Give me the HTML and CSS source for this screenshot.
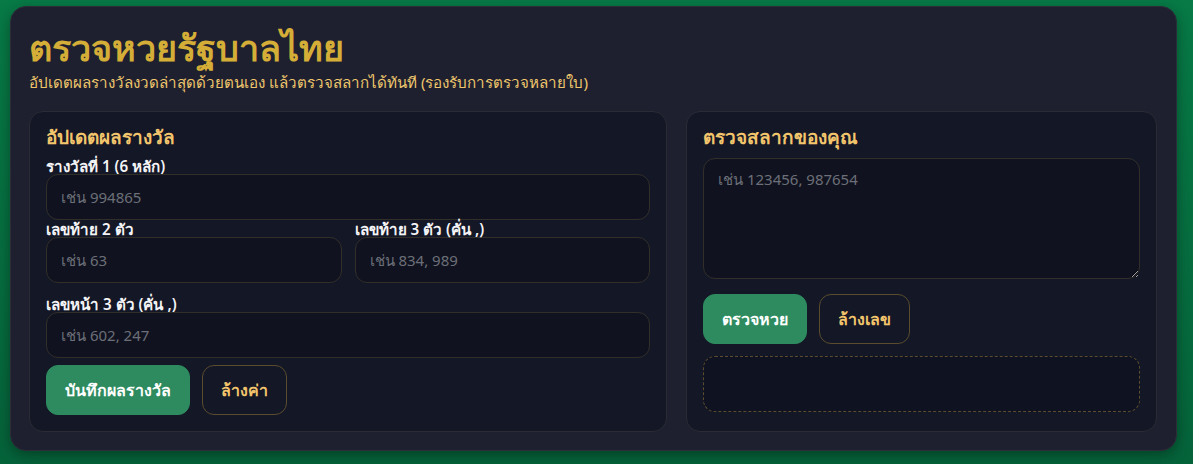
FILE: index.html
```html
<!DOCTYPE html>
<html lang="th">
<head>
<meta charset="utf-8">
<title>ตรวจหวยรัฐบาลไทย</title>
<link rel="stylesheet" href="styles.css">
</head>
<body>
<div class="card">
  <h1 class="title">ตรวจหวยรัฐบาลไทย</h1>
  <p class="subtitle">อัปเดตผลรางวัลงวดล่าสุดด้วยตนเอง แล้วตรวจสลากได้ทันที (รองรับการตรวจหลายใบ)</p>
  <div class="grid">
    <section class="panel">
      <h2 class="panel-title">อัปเดตผลรางวัล</h2>
      <label class="label">รางวัลที่ 1 (6 หลัก)</label>
      <input class="input" placeholder="เช่น 994865">
      <div class="row">
        <div class="col">
          <label class="label">เลขท้าย 2 ตัว</label>
          <input class="input" placeholder="เช่น 63">
        </div>
        <div class="col">
          <label class="label">เลขท้าย 3 ตัว (คั่น ,)</label>
          <input class="input" placeholder="เช่น 834, 989">
        </div>
      </div>
      <label class="label label-gap">เลขหน้า 3 ตัว (คั่น ,)</label>
      <input class="input" placeholder="เช่น 602, 247">
      <div class="actions">
        <button class="btn btn-primary">บันทึกผลรางวัล</button>
        <button class="btn btn-ghost">ล้างค่า</button>
      </div>
    </section>
    <section class="panel">
      <h2 class="panel-title">ตรวจสลากของคุณ</h2>
      <textarea class="textarea" placeholder="เช่น 123456, 987654"></textarea>
      <div class="actions actions-right">
        <button class="btn btn-primary">ตรวจหวย</button>
        <button class="btn btn-ghost">ล้างเลข</button>
      </div>
      <div class="result"></div>
    </section>
  </div>
</div>
</body>
</html>
```
FILE: styles.css
```css
* { box-sizing: border-box; }
html, body { height: 100%; }
body {
  margin: 0;
  padding: 6px 0 0 10px;
  background: linear-gradient(180deg, #077a46 0%, #05633a 100%);
  font-family: "Noto Sans", "Open Sans", sans-serif;
  color: #f1f1f1;
}
.card {
  width: 1167px;
  background: #1e2030;
  border: 1px solid #2c2d38;
  border-radius: 16px;
  padding: 19px 19px 18px 18px;
  box-shadow: 0 4px 14px rgba(0, 0, 0, 0.35);
}
.title {
  margin: 0;
  font-size: 36px;
  line-height: 44px;
  font-weight: 700;
  color: #d5ae38;
}
.subtitle {
  margin: 1px 0 0;
  font-size: 15.2px;
  line-height: 22px;
  color: #efc66b;
}
.grid {
  display: grid;
  grid-template-columns: 638px 1fr;
  gap: 19px;
  margin-top: 18px;
}
.panel {
  background: #141726;
  border: 1px solid #2a2b35;
  border-radius: 14px;
  padding: 12px 16px 16px;
  display: flex;
  flex-direction: column;
}
.panel-title {
  margin: 0 0 8px;
  font-size: 19px;
  line-height: 26px;
  font-weight: 700;
  color: #f2c56c;
}
.label {
  display: block;
  font-size: 15.2px;
  line-height: 16px;
  font-weight: 600;
  color: #f4f4f6;
}
.label-gap { margin-top: 13px; }
.input, .textarea {
  display: block;
  width: 100%;
  background: #10131f;
  border: 1px solid #322f2a;
  border-radius: 12px;
  color: #eee;
  font-family: inherit;
  font-size: 15px;
  outline: none;
}
.input {
  height: 46px;
  padding: 0 14px;
}
.input::placeholder, .textarea::placeholder { color: #6c6f78; }
.row {
  display: grid;
  grid-template-columns: 1fr 1fr;
  gap: 13px;
  margin-top: 1px;
}
.textarea {
  height: 121px;
  padding: 10px 14px;
  line-height: 20px;
  resize: vertical;
}
.actions {
  display: flex;
  gap: 12px;
  margin-top: 7px;
}
.actions-right { margin-top: 15px; }
.btn {
  height: 50px;
  padding: 0 18px;
  border-radius: 12px;
  font-family: inherit;
  font-size: 16px;
  font-weight: 700;
  cursor: pointer;
}
.btn-primary {
  background: #2e8b5f;
  border: 1px solid #2e8b5f;
  color: #ffffff;
}
.btn-ghost {
  background: transparent;
  border: 1px solid #5a4c2c;
  color: #f2c56c;
}
.result {
  margin-top: 12px;
  height: 56px;
  border: 1px dashed #5a4c2c;
  border-radius: 12px;
  background: #0f1220;
}
```
